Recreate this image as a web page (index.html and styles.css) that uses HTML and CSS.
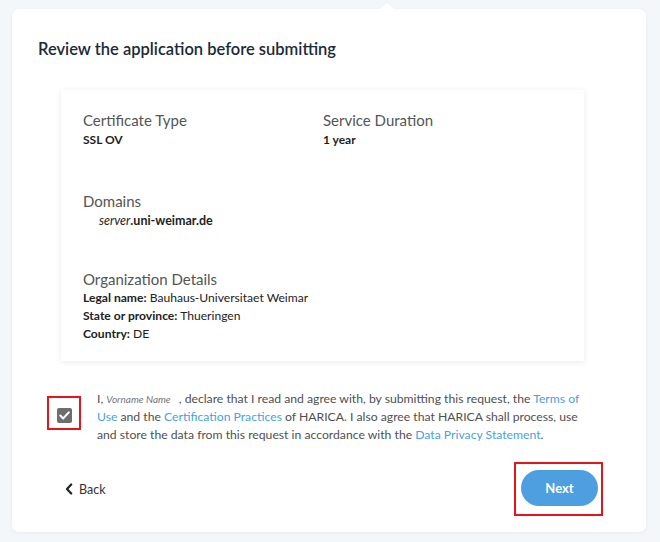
FILE: index.html
```html
<!DOCTYPE html>
<html lang="en">
<head>
<meta charset="utf-8">
<title>Review the application</title>
<link rel="stylesheet" href="styles.css">
</head>
<body>
<div class="page">
  <div class="card">
    <span class="notch"></span>
    <h1 class="title">Review the application before submitting</h1>
    <div class="summary">
      <div class="row-two">
        <div class="field">
          <div class="label">Certificate Type</div>
          <div class="value">SSL OV</div>
        </div>
        <div class="field">
          <div class="label">Service Duration</div>
          <div class="value">1 year</div>
        </div>
      </div>
      <div class="field domains">
        <div class="label">Domains</div>
        <div class="value domain"><em>server</em>.uni-weimar.de</div>
      </div>
      <div class="field org">
        <div class="label">Organization Details</div>
        <div class="line"><b>Legal name:</b> Bauhaus-Universitaet Weimar</div>
        <div class="line"><b>State or province:</b> Thueringen</div>
        <div class="line"><b>Country:</b> DE</div>
      </div>
    </div>
    <div class="agree">
      <span class="mark-box">
        <span class="checkbox">
          <svg width="11" height="9" viewBox="0 0 11 9"><path d="M1.3 4.6 L4.2 7.4 L9.8 1.4" fill="none" stroke="#fff" stroke-width="2.1" stroke-linecap="round" stroke-linejoin="round"/></svg>
        </span>
      </span>
      <p class="agree-text">I, <em class="name">Vorname Name</em> , declare that I read and agree with, by submitting this request, the <a class="link">Terms of Use</a> and the <a class="link">Certification Practices</a> of HARICA. I also agree that HARICA shall process, use and store the data from this request in accordance with the <a class="link">Data Privacy Statement</a>.</p>
    </div>
    <div class="footer">
      <a class="back">
        <svg width="8" height="12" viewBox="0 0 8 12"><path d="M6.2 1.5 L2 6 L6.2 10.5" fill="none" stroke="#222" stroke-width="2.2" stroke-linecap="round" stroke-linejoin="round"/></svg>
        <span>Back</span>
      </a>
      <span class="mark-box next-box">
        <button class="next">Next</button>
      </span>
    </div>
  </div>
</div>
</body>
</html>
```
FILE: styles.css
```css
* { box-sizing: border-box; }
html, body {
  margin: 0;
  padding: 0;
  background: #f4f7fa;
  font-family: Lato, "Open Sans", "Liberation Sans", sans-serif;
}
.page {
  padding: 9px 14px 10px 12px;
}
.card {
  position: relative;
  background: #fff;
  border-radius: 7px;
  height: 523px;
  padding: 28px 43px 0 26px;
  box-shadow: 0 1px 4px rgba(30, 60, 100, 0.06);
}
.notch {
  position: absolute;
  top: -6px;
  left: 368px;
  width: 0;
  height: 0;
  border-left: 7px solid transparent;
  border-right: 7px solid transparent;
  border-bottom: 6px solid #fff;
}
.title {
  margin: 0;
  font-size: 16.5px;
  line-height: 24px;
  font-weight: 600;
  color: #1b2a3a;
}
.summary {
  margin: 29px 19px 0 23px;
  padding: 20px 22px 18px;
  background: #fff;
  box-shadow: 0 1px 6px rgba(0, 0, 0, 0.09);
}
.row-two {
  display: grid;
  grid-template-columns: 240px 1fr;
}
.label {
  font-size: 15px;
  line-height: 20px;
  color: #555;
}
.value {
  font-size: 12px;
  line-height: 20px;
  font-weight: 700;
  color: #1e1e1e;
}
.domains { margin-top: 41px; }
.domain {
  padding-left: 16px;
  font-size: 12.5px;
}
.domain em { font-weight: 400; }
.org { margin-top: 38px; }
.line {
  font-size: 12.1px;
  line-height: 18px;
  color: #222;
}
.line b { font-weight: 700; }
.agree {
  display: flex;
  align-items: flex-start;
  margin-top: 29px;
}
.mark-box {
  display: flex;
  border: 2px solid #e3161e;
}
.agree .mark-box {
  width: 34px;
  height: 34px;
  margin: 6px 16px 0 9px;
  flex: none;
  align-items: center;
  justify-content: center;
  padding-top: 4px;
}
.checkbox {
  display: flex;
  align-items: center;
  justify-content: center;
  width: 15px;
  height: 15px;
  border-radius: 2px;
  background: #6e6e6e;
}
.agree-text {
  margin: 0 18px 0 0;
  font-size: 12.2px;
  line-height: 18px;
  color: #505050;
}
.name {
  font-size: 10px;
  line-height: 10px;
  color: #777;
  margin-right: 5px;
}
.link { color: #4a9fe3; }
.footer {
  display: flex;
  align-items: center;
  justify-content: space-between;
  margin-top: 18px;
}
.back {
  display: flex;
  align-items: center;
  gap: 6px;
  margin-left: 27px;
  font-size: 12.5px;
  color: #333;
}
.next-box {
  padding: 6px 3px 8px 5px;
}
.next {
  width: 77px;
  height: 36px;
  border: none;
  border-radius: 18px;
  background: #4d9fe0;
  color: #fff;
  font-family: Lato, "Open Sans", "Liberation Sans", sans-serif;
  font-size: 13px;
  font-weight: 700;
}
```
